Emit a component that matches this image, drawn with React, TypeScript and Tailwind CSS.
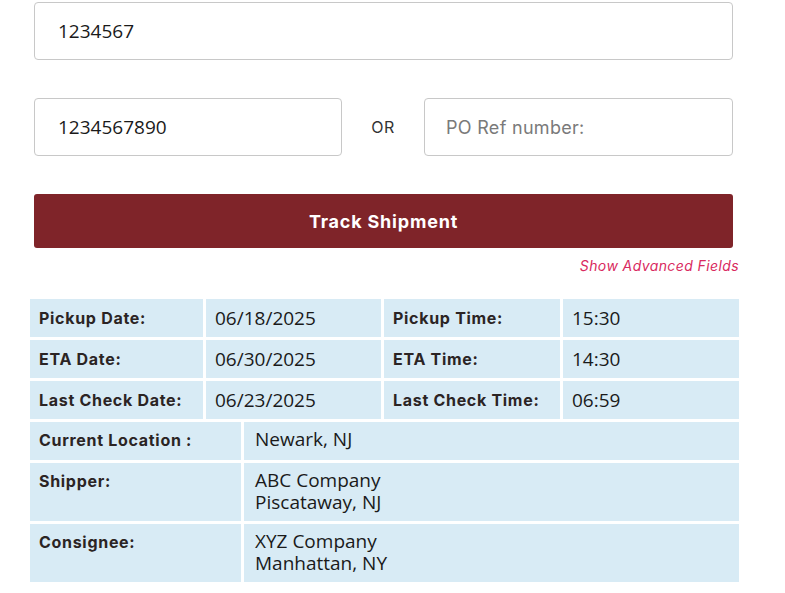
const label = "font-['Inter',sans-serif] font-bold text-[16px] tracking-[0.7px] text-[#2b2424]";
const value = "font-['Open_Sans',sans-serif] text-[19px] text-[#1a1a1a]";

const topRows = [
  ["Pickup Date:", "06/18/2025", "Pickup Time:", "15:30"],
  ["ETA Date:", "06/30/2025", "ETA Time:", "14:30"],
  ["Last Check Date:", "06/23/2025", "Last Check Time:", "06:59"],
];

const bottomRows = [
  ["Current Location :", ["Newark, NJ"]],
  ["Shipper:", ["ABC Company", "Piscataway, NJ"]],
  ["Consignee:", ["XYZ Company", "Manhattan, NY"]],
] as const;

export default function App() {
  return (
    <div className="min-h-screen bg-white pl-[30px] pt-[2px]">
      <div className="w-[709px]">
        {/* search form */}
        <div className="pl-[4px] pr-[6px]">
          <input
            defaultValue="1234567"
            className={`${value} block h-[58px] w-full rounded-[4px] border border-[#c8c8c8] px-[23px] outline-none`}
          />
          <div className="mt-[38px] grid grid-cols-[308px_82px_1fr] items-center">
            <input
              defaultValue="1234567890"
              className={`${value} block h-[58px] w-full rounded-[4px] border border-[#c8c8c8] px-[23px] outline-none`}
            />
            <span className="text-center font-['Inter',sans-serif] text-[16px] tracking-[0.5px] text-[#333]">
              OR
            </span>
            <input
              placeholder="PO Ref number:"
              className="block h-[58px] w-full rounded-[4px] border border-[#c8c8c8] px-[21px] font-['Inter',sans-serif] text-[18px] tracking-[0.3px] outline-none placeholder:text-[#7a7a7a]"
            />
          </div>
          <button
            type="button"
            className="mt-[38px] block h-[54px] w-full rounded-[3px] bg-[#7f2429] font-['Inter',sans-serif] text-[18px] font-bold tracking-[0.8px] text-white"
          >
            Track Shipment
          </button>
        </div>
        <div className="mt-[5px] text-right">
          <a className="font-['Inter',sans-serif] text-[14px] italic tracking-[0.4px] text-[#d92a60]">
            Show Advanced Fields
          </a>
        </div>

        {/* details table */}
        <div className="mt-[22px] grid grid-cols-[173px_175px_176px_176px] gap-[3px]">
          {topRows.map((r) =>
            r.map((c, i) => (
              <div
                key={r[0] + i}
                className={`bg-[#d8ebf5] px-[9px] py-[8px] leading-[22px] ${
                  i % 2 === 0 ? label : value
                }`}
              >
                {c}
              </div>
            ))
          )}
        </div>
        <div className="mt-[3px] grid grid-cols-[211px_1fr] gap-[3px]">
          {bottomRows.map(([l, v]) => (
            <>
              <div key={l} className={`${label} bg-[#d8ebf5] px-[9px] pt-[7px] pb-[9px] leading-[22px]`}>
                {l}
              </div>
              <div key={l + "v"} className={`${value} bg-[#d8ebf5] px-[11px] pt-[6px] pb-[8px] leading-[22px]`}>
                {v.map((line) => (
                  <div key={line}>{line}</div>
                ))}
              </div>
            </>
          ))}
        </div>
      </div>
    </div>
  );
}
